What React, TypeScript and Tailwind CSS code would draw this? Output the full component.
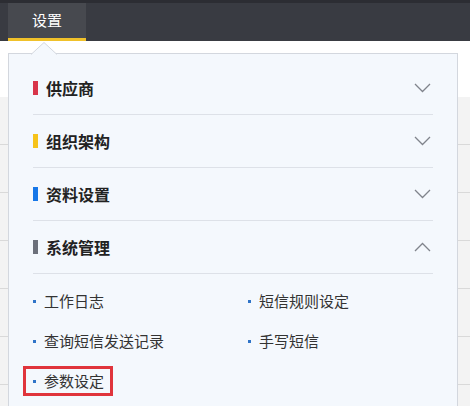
const font = { fontFamily: '"Microsoft YaHei", "Noto Sans CJK SC", "Noto Sans", sans-serif' };

const groups = [
  { name: "供应商", color: "bg-[#d8354a]", open: false },
  { name: "组织架构", color: "bg-[#f6c31a]", open: false },
  { name: "资料设置", color: "bg-[#1677e8]", open: false },
  { name: "系统管理", color: "bg-[#6c707b]", open: true },
];

const subs = ["工作日志", "短信规则设定", "查询短信发送记录", "手写短信", "参数设定"];

function Chevron({ up }: { up: boolean }) {
  return (
    <svg width="17" height="10" viewBox="0 0 17 10" fill="none" className="shrink-0">
      <path
        d={up ? "M1 9 L8.5 1.5 L16 9" : "M1 1 L8.5 8.5 L16 1"}
        stroke="#80848c"
        strokeWidth="1.3"
      />
    </svg>
  );
}

function Bullet() {
  return <span className="w-[3px] h-[3px] bg-[#2f74c8] shrink-0" />;
}

export default function App() {
  return (
    <div className="relative w-[470px] h-[406px] overflow-hidden bg-white" style={font}>
      {/* top nav */}
      <div className="h-[41px] bg-[#393b42] border-t-[3px] border-[#2c2d33] flex pl-2">
        <div className="w-[78px] bg-[#47494f] border-b-[3px] border-[#f0c12a] flex items-center justify-center text-white text-[15px]">
          设置
        </div>
      </div>

      {/* page rows behind the menu */}
      <div className="flex flex-col pt-[56px]">
        {Array.from({ length: 7 }).map((_, i) => (
          <div key={i} className="h-[48px] border-b border-[#d9d9d9] bg-[#f3f3f3]" />
        ))}
      </div>

      {/* dropdown */}
      <div className="absolute left-2 top-[53px] w-[450px] h-[360px] bg-[#f4f8fd] border border-[#d3d7de] px-6 pt-2">
        <svg width="26" height="13" viewBox="0 0 26 13" className="absolute left-[22px] -top-[12px]">
          <path d="M0 12.5 L13 0.5 L26 12.5" fill="#f4f8fd" stroke="#d3d7de" strokeWidth="1" />
        </svg>
        {groups.map((g) => (
          <div key={g.name} className="h-[53px] border-b border-[#dde1e8] flex items-center">
            <span className={`w-[5px] h-[14px] ${g.color} mr-[8px]`} />
            <span className="text-[16px] font-bold text-[#222] flex-1">{g.name}</span>
            <span className="mr-[2px]">
              <Chevron up={g.open} />
            </span>
          </div>
        ))}
        <div className="grid grid-cols-[215px_1fr] pt-[7px]">
          {subs.map((s, i) =>
            i === 4 ? (
              <div key={s} className="h-[40px] flex items-center">
                <div className="-ml-[10px] h-[30px] w-[90px] border-[3px] border-[#e0343c] flex items-center gap-[8px] pl-[7px]">
                  <Bullet />
                  <span className="text-[15px] text-[#333]">{s}</span>
                </div>
              </div>
            ) : (
              <div key={s} className="h-[40px] flex items-center gap-[8px]">
                <Bullet />
                <span className="text-[15px] text-[#333]">{s}</span>
              </div>
            )
          )}
        </div>
      </div>
    </div>
  );
}
